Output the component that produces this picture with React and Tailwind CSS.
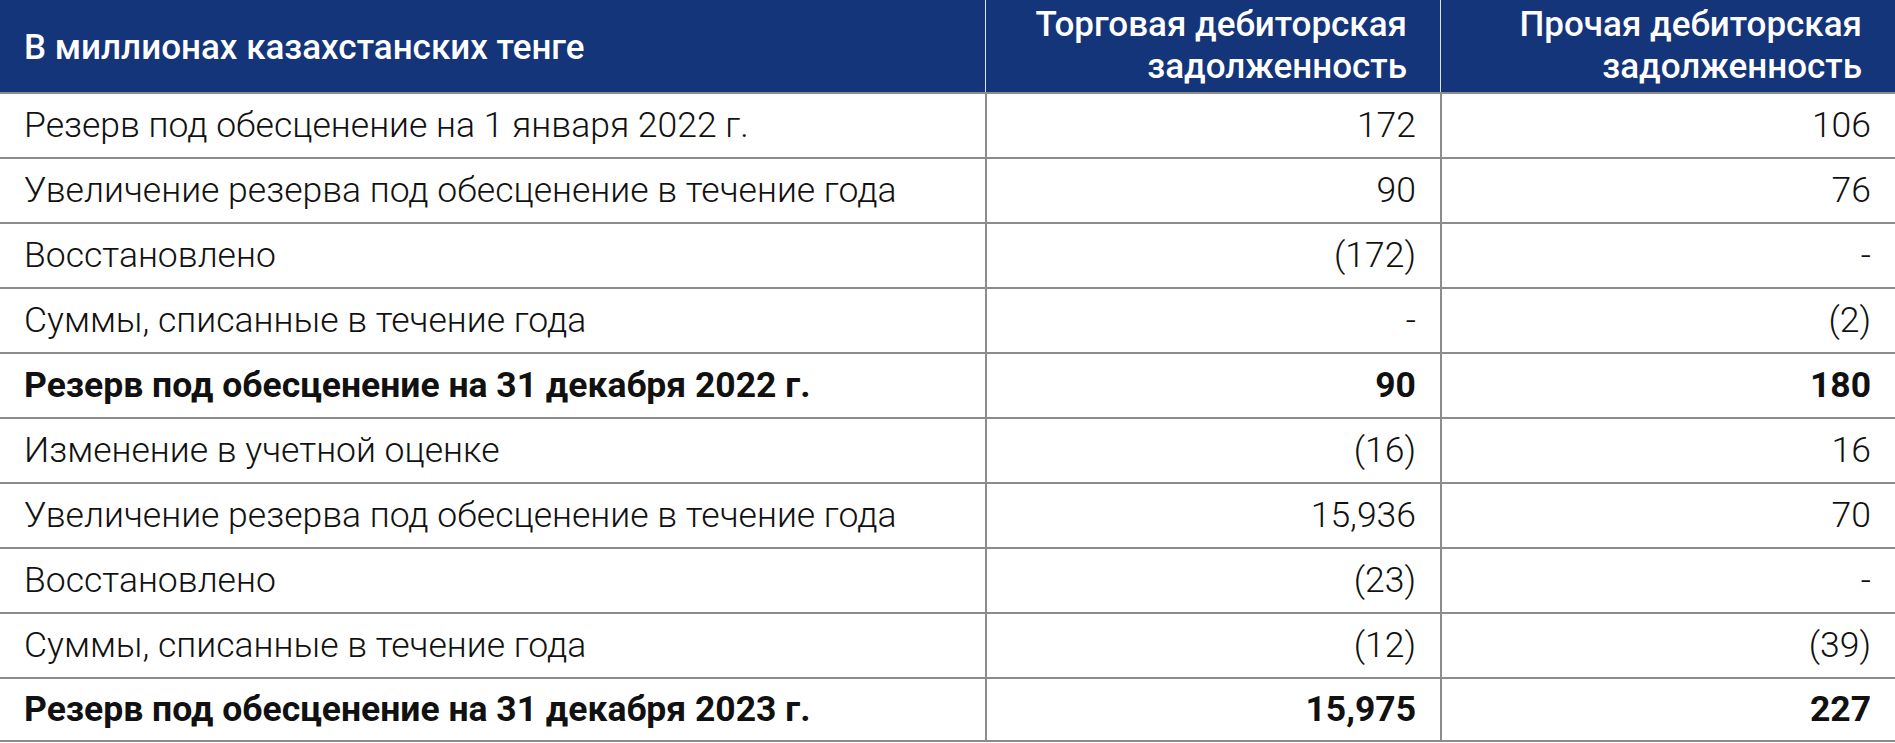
const rows = [
  { label: "Резерв под обесценение на 1 января 2022 г.", a: "172", b: "106" },
  { label: "Увеличение резерва под обесценение в течение года", a: "90", b: "76" },
  { label: "Восстановлено", a: "(172)", b: "-" },
  { label: "Суммы, списанные в течение года", a: "-", b: "(2)" },
  { label: "Резерв под обесценение на 31 декабря 2022 г.", a: "90", b: "180", bold: true },
  { label: "Изменение в учетной оценке", a: "(16)", b: "16" },
  { label: "Увеличение резерва под обесценение в течение года", a: "15,936", b: "70" },
  { label: "Восстановлено", a: "(23)", b: "-" },
  { label: "Суммы, списанные в течение года", a: "(12)", b: "(39)" },
  { label: "Резерв под обесценение на 31 декабря 2023 г.", a: "15,975", b: "227", bold: true },
];

export default function App() {
  return (
    <div
      className="w-[1895px] bg-white text-[#111]"
      style={{ fontFamily: "Roboto, 'Liberation Sans', sans-serif" }}
    >
      {/* Header */}
      <div className="grid grid-cols-[985px_455px_1fr] h-[92px] bg-[#15357a] text-white font-medium text-[35px] leading-[42px]">
        <div className="flex items-center px-6 pt-1">В миллионах казахстанских тенге</div>
        <div className="flex flex-col justify-center items-end text-right pl-6 pr-[33px] border-l border-[#dfe3ee]">
          <span>Торговая дебиторская</span>
          <span>задолженность</span>
        </div>
        <div className="flex flex-col justify-center items-end text-right pl-6 pr-[33px] border-l border-[#dfe3ee]">
          <span>Прочая дебиторская</span>
          <span>задолженность</span>
        </div>
      </div>

      {/* Body */}
      {rows.map((r, i) => (
        <div
          key={i}
          className={`grid grid-cols-[985px_455px_1fr] h-[65px] border-t-2 border-[#8c8c8c] text-[35.5px] ${
            r.bold ? "font-bold" : "font-light"
          } ${i === rows.length - 1 ? "border-b-2" : ""}`}
        >
          <div className="flex items-center px-6">{r.label}</div>
          <div className="flex items-center justify-end px-6 border-l-2 border-[#8c8c8c]">{r.a}</div>
          <div className="flex items-center justify-end px-6 border-l-2 border-[#8c8c8c]">{r.b}</div>
        </div>
      ))}
    </div>
  );
}
